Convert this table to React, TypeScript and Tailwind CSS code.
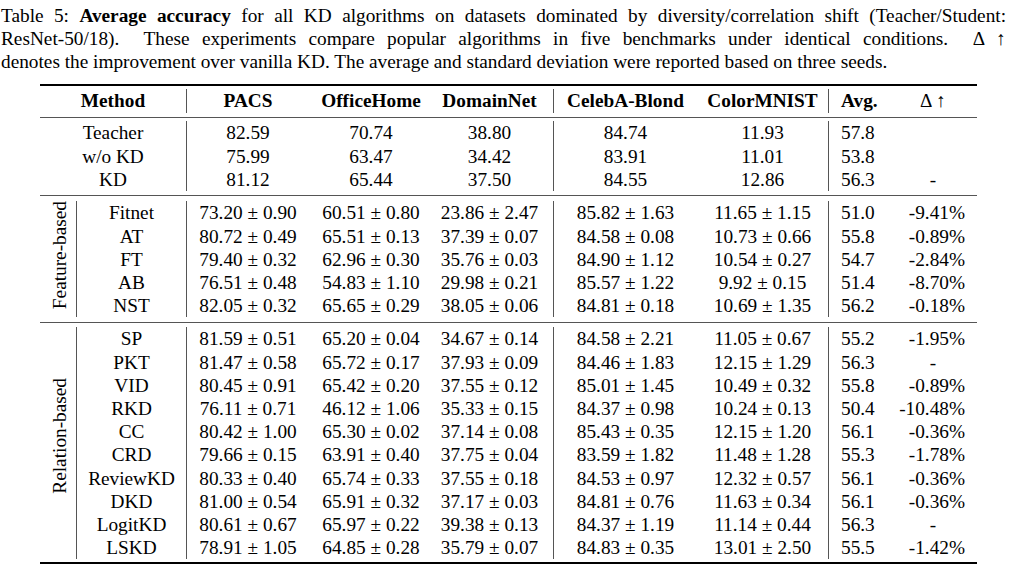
import React from "react";

type Row = [string, string, string, string, string, string, string, string];

const top: Row[] = [
  ["Teacher", "82.59", "70.74", "38.80", "84.74", "11.93", "57.8", ""],
  ["w/o KD", "75.99", "63.47", "34.42", "83.91", "11.01", "53.8", ""],
  ["KD", "81.12", "65.44", "37.50", "84.55", "12.86", "56.3", "-"],
];

const feature: Row[] = [
  ["Fitnet", "73.20 ± 0.90", "60.51 ± 0.80", "23.86 ± 2.47", "85.82 ± 1.63", "11.65 ± 1.15", "51.0", "-9.41%"],
  ["AT", "80.72 ± 0.49", "65.51 ± 0.13", "37.39 ± 0.07", "84.58 ± 0.08", "10.73 ± 0.66", "55.8", "-0.89%"],
  ["FT", "79.40 ± 0.32", "62.96 ± 0.30", "35.76 ± 0.03", "84.90 ± 1.12", "10.54 ± 0.27", "54.7", "-2.84%"],
  ["AB", "76.51 ± 0.48", "54.83 ± 1.10", "29.98 ± 0.21", "85.57 ± 1.22", "9.92 ± 0.15", "51.4", "-8.70%"],
  ["NST", "82.05 ± 0.32", "65.65 ± 0.29", "38.05 ± 0.06", "84.81 ± 0.18", "10.69 ± 1.35", "56.2", "-0.18%"],
];

const relation: Row[] = [
  ["SP", "81.59 ± 0.51", "65.20 ± 0.04", "34.67 ± 0.14", "84.58 ± 2.21", "11.05 ± 0.67", "55.2", "-1.95%"],
  ["PKT", "81.47 ± 0.58", "65.72 ± 0.17", "37.93 ± 0.09", "84.46 ± 1.83", "12.15 ± 1.29", "56.3", "-"],
  ["VID", "80.45 ± 0.91", "65.42 ± 0.20", "37.55 ± 0.12", "85.01 ± 1.45", "10.49 ± 0.32", "55.8", "-0.89%"],
  ["RKD", "76.11 ± 0.71", "46.12 ± 1.06", "35.33 ± 0.15", "84.37 ± 0.98", "10.24 ± 0.13", "50.4", "-10.48%"],
  ["CC", "80.42 ± 1.00", "65.30 ± 0.02", "37.14 ± 0.08", "85.43 ± 0.35", "12.15 ± 1.20", "56.1", "-0.36%"],
  ["CRD", "79.66 ± 0.15", "63.91 ± 0.40", "37.75 ± 0.04", "83.59 ± 1.82", "11.48 ± 1.28", "55.3", "-1.78%"],
  ["ReviewKD", "80.33 ± 0.40", "65.74 ± 0.33", "37.55 ± 0.18", "84.53 ± 0.97", "12.32 ± 0.57", "56.1", "-0.36%"],
  ["DKD", "81.00 ± 0.54", "65.91 ± 0.32", "37.17 ± 0.03", "84.81 ± 0.76", "11.63 ± 0.34", "56.1", "-0.36%"],
  ["LogitKD", "80.61 ± 0.67", "65.97 ± 0.22", "39.38 ± 0.13", "84.37 ± 1.19", "11.14 ± 0.44", "56.3", "-"],
  ["LSKD", "78.91 ± 1.05", "64.85 ± 0.28", "35.79 ± 0.07", "84.83 ± 0.35", "13.01 ± 2.50", "55.5", "-1.42%"],
];

function Cells({ r }: { r: Row }) {
  return (
    <>
      <div className="w-[122px] text-center">{r[1]}</div>
      <div className="w-[124px] text-center">{r[2]}</div>
      <div className="w-[121px] pr-[7px] text-center border-r border-[#555]">{r[3]}</div>
      <div className="w-[143px] text-center">{r[4]}</div>
      <div className="w-[132px] text-center border-r border-[#555]">{r[5]}</div>
      <div className="w-[60px] pl-[12px]">{r[6]}</div>
      {r[7] === "-" || r[7] === "" ? (
        <div className="w-[88px] text-center">{r[7]}</div>
      ) : (
        <div className="w-[88px] pr-[12px] text-right">{r[7]}</div>
      )}
    </>
  );
}

function Group({ label, rows, shift }: { label: string; rows: Row[]; shift: string }) {
  return (
    <div className="flex">
      <div className={"flex w-[37px] items-center justify-center border-r border-[#555] pl-[3px] " + shift}>
        <span className="rotate-180 whitespace-nowrap [writing-mode:vertical-rl]">{label}</span>
      </div>
      <div className="flex flex-col">
        {rows.map((r) => (
          <div key={r[0]} className="flex h-[23.2px]">
            <div className="w-[110px] text-center border-r border-[#555]">{r[0]}</div>
            <Cells r={r} />
          </div>
        ))}
      </div>
    </div>
  );
}

export default function App() {
  return (
    <div className="min-h-[574px] w-[1016px] bg-white text-black font-['Liberation_Serif',serif] text-[19.3px] leading-[23.2px]">
      <div className="w-[1006px] pl-[1px] pt-[5px] leading-[22.8px]">
        <div className="text-justify [text-align-last:justify]">
          Table 5: <b>Average accuracy</b> for all KD algorithms on datasets dominated by diversity/correlation shift (Teacher/Student:
        </div>
        <div className="text-justify [text-align-last:justify]">
          ResNet-50/18).&nbsp; These experiments compare popular algorithms in five benchmarks under identical conditions.&nbsp; Δ ↑
        </div>
        <div>
          denotes the improvement over vanilla KD. The average and standard deviation were reported based on three seeds.
        </div>
      </div>

      <div className="ml-[40px] mt-[10.6px] w-[937px]">
        <div className="h-[2px] bg-black" />
        <div className="pt-[3.5px] pb-[4px]">
          <div className="flex h-[23.2px] font-bold">
            <div className="w-[147px] text-center border-r border-[#555]">Method</div>
            <div className="w-[122px] text-center">PACS</div>
            <div className="w-[124px] text-center">OfficeHome</div>
            <div className="w-[121px] pr-[7px] text-center border-r border-[#555]">DomainNet</div>
            <div className="w-[143px] text-center">CelebA-Blond</div>
            <div className="w-[132px] text-center border-r border-[#555]">ColorMNIST</div>
            <div className="w-[60px] pl-[12px]">Avg.</div>
            <div className="w-[88px] text-center font-normal">Δ ↑</div>
          </div>
        </div>
        <div className="h-px bg-[#555]" />
        <div className="pt-[3.7px] pb-[4.5px]">
          {top.map((r) => (
            <div key={r[0]} className="flex h-[23.2px]">
              <div className="w-[147px] text-center border-r border-[#555]">{r[0]}</div>
              <Cells r={r} />
            </div>
          ))}
        </div>
        <div className="h-px bg-[#555]" />
        <div className="pt-[4.9px] pb-[4.5px]">
          <Group label="Feature-based" rows={feature} shift="pb-[8px]" />
        </div>
        <div className="h-px bg-[#555]" />
        <div className="pt-[4.5px] pb-[3px]">
          <Group label="Relation-based" rows={relation} shift="pb-[16px]" />
        </div>
        <div className="h-[2px] bg-black" />
      </div>
    </div>
  );
}
